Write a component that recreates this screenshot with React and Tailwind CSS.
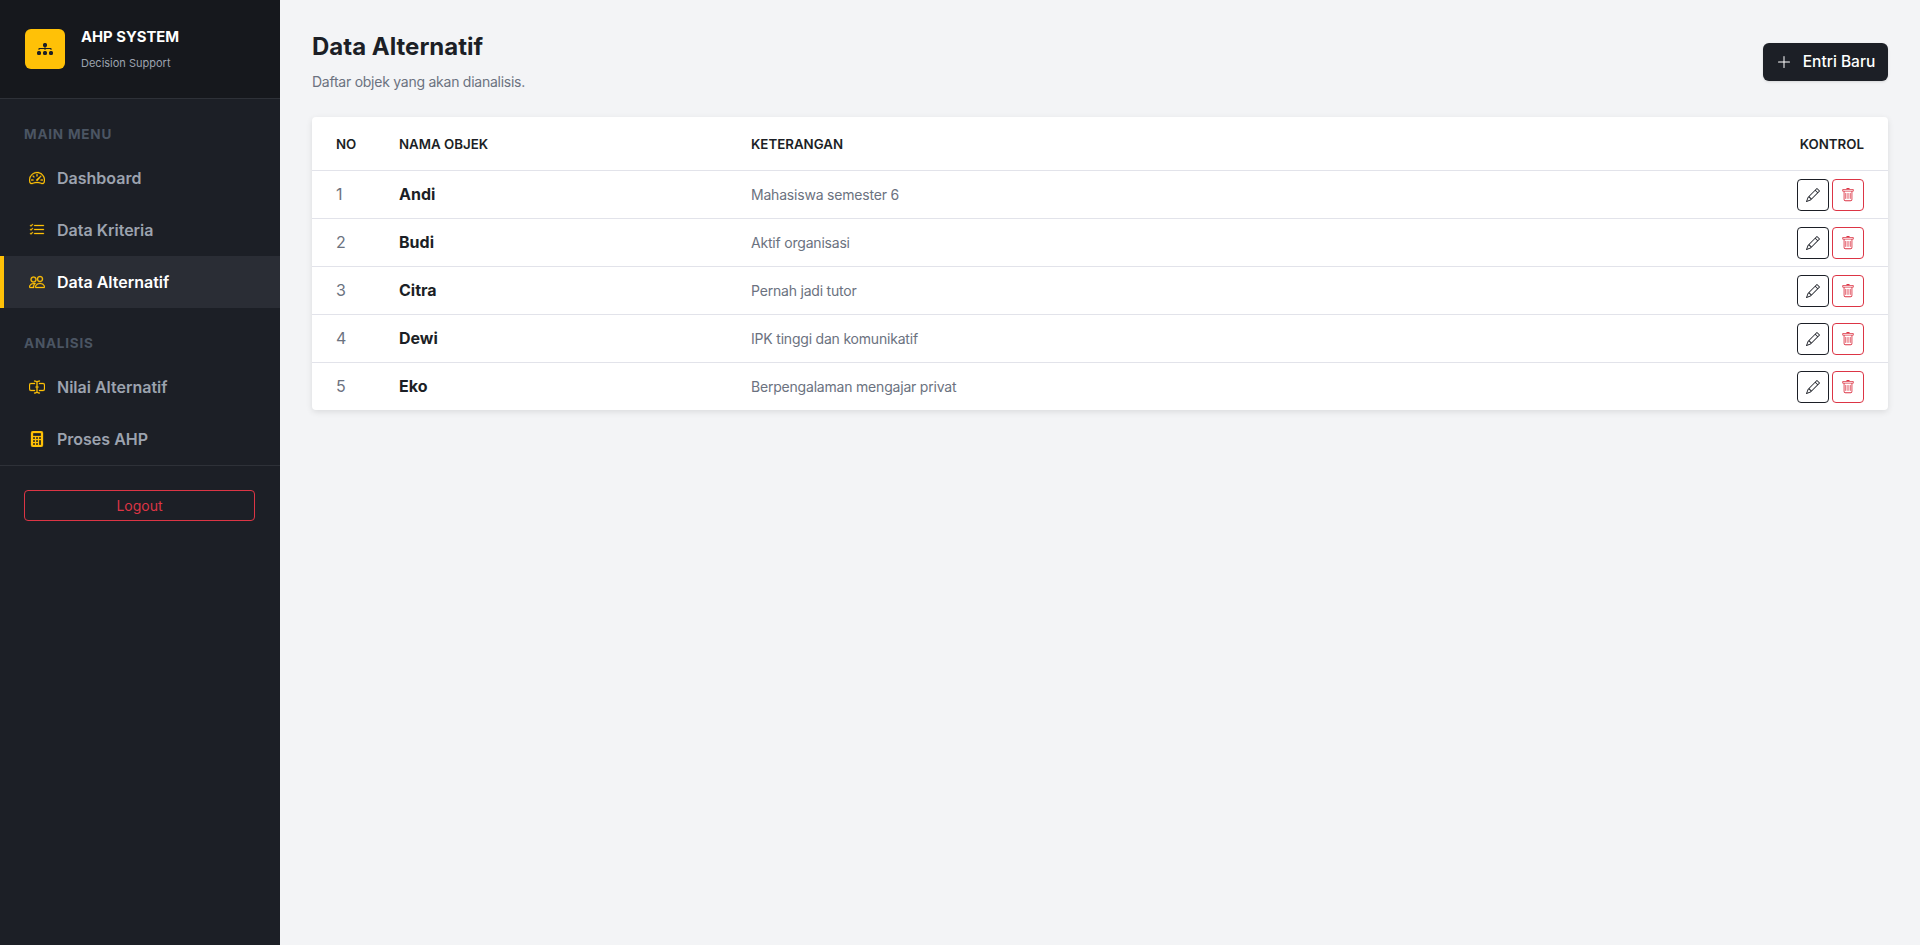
import React from "react";
import { BsSpeedometer2, BsListCheck, BsPeople, BsInputCursorText, BsCalculatorFill, BsDiagram3Fill, BsPencil, BsTrash, BsPlusLg } from "react-icons/bs";

function NavItem({ icon: Icon, label, active }) {
  return (
    <a className={"flex h-[52px] items-center border-l-4 pl-[25px] text-[16px] font-semibold " + (active ? "border-[#ffc107] bg-[#2a2d35] text-white" : "border-transparent text-[#9ca3af]")}>
      <Icon className="mr-[12px] h-[16px] w-[16px] shrink-0 stroke-[0.3px] text-[#ffc107]" />
      {label}
    </a>
  );
}

const rows = [
  ["1", "Andi", "Mahasiswa semester 6"],
  ["2", "Budi", "Aktif organisasi"],
  ["3", "Citra", "Pernah jadi tutor"],
  ["4", "Dewi", "IPK tinggi dan komunikatif"],
  ["5", "Eko", "Berpengalaman mengajar privat"],
];

export default function App() {
  return (
    <div className="flex min-h-screen bg-[#f3f4f6] font-['Inter','Liberation_Sans',sans-serif]">
      <aside className="w-[280px] shrink-0 bg-[#1c1f26]">
        <div className="flex h-[99px] items-center gap-[16px] border-b border-[#2e3138] bg-[#16181d] pl-[25px]">
          <div className="flex h-[40px] w-[40px] items-center justify-center rounded-[6px] bg-[#ffc107] text-[#1c1f26]">
            <BsDiagram3Fill className="h-[16px] w-[16px]" />
          </div>
          <div className="pb-[3px]">
            <div className="text-[14.8px] leading-[24px] font-bold text-white">AHP SYSTEM</div>
            <div className="mt-[6px] text-[11px] leading-[16px] text-[#9ca3af]">Decision Support</div>
          </div>
        </div>
        <div className="pt-[25px] pb-[8px] pl-[24px] text-[13.5px] leading-[20px] font-bold tracking-[0.8px] text-[#4b5563]">MAIN MENU</div>
        <NavItem icon={BsSpeedometer2} label="Dashboard" />
        <NavItem icon={BsListCheck} label="Data Kriteria" />
        <NavItem icon={BsPeople} label="Data Alternatif" active />
        <div className="pt-[25px] pb-[8px] pl-[24px] text-[13.5px] leading-[20px] font-bold tracking-[0.8px] text-[#4b5563]">ANALISIS</div>
        <NavItem icon={BsInputCursorText} label="Nilai Alternatif" />
        <NavItem icon={BsCalculatorFill} label="Proses AHP" />
        <div className="border-t border-[#2e3138] pt-[24px] pr-[25px] pl-[24px]">
          <button className="flex h-[31px] w-full items-center justify-center rounded-[4px] border border-[#dc3545] text-[14px] text-[#dc3545]">Logout</button>
        </div>
      </aside>
      <main className="min-w-0 flex-1 px-[32px] pt-[32px]">
        <div className="flex items-center justify-between">
          <div>
            <h1 className="text-[24px] leading-[29px] font-bold text-[#1c1f26]">Data Alternatif</h1>
            <p className="mt-[10px] text-[14px] leading-[21px] tracking-[-0.25px] text-[#6b7280]">Daftar objek yang akan dianalisis.</p>
          </div>
          <button className="flex h-[38px] w-[125px] items-center justify-center gap-[11px] rounded-[6px] bg-[#1c1f26] text-[15.5px] font-medium text-white shadow-sm">
            <BsPlusLg className="h-[16px] w-[16px]" />
            Entri Baru
          </button>
        </div>
        <div className="mt-[25px] overflow-hidden rounded-[4px] bg-white shadow-[0_2px_6px_rgba(0,0,0,0.1)]">
          <table className="w-full border-collapse text-left">
            <thead>
              <tr className="h-[53px] border-b border-[#e2e3ea] text-[13.3px] text-[#1c1f26]">
                <th className="w-[87px] pt-[3px] pl-[24px] font-semibold">NO</th>
                <th className="w-[352px] pt-[3px] font-semibold">NAMA OBJEK</th>
                <th className="pt-[3px] font-semibold">KETERANGAN</th>
                <th className="pt-[3px] pr-[24px] text-right font-semibold">KONTROL</th>
              </tr>
            </thead>
            <tbody>
              {rows.map((r, i) => (
                <tr key={r[0]} className={"h-[48px] " + (i < rows.length - 1 ? "border-b border-[#e2e3ea]" : "")}>
                  <td className="pl-[24px] text-[16px] text-[#6b7280]">{r[0]}</td>
                  <td className="text-[16px] font-bold text-[#1c1f26]">{r[1]}</td>
                  <td className="text-[14px] tracking-[-0.2px] text-[#6b7280]">{r[2]}</td>
                  <td className="pt-[1px] pr-[24px]">
                    <div className="flex justify-end gap-[3px]">
                      <button className="flex h-[32px] w-[32px] items-center justify-center rounded-[4px] border border-[#1c1f26] text-[#1c1f26]"><BsPencil className="h-[14px] w-[14px]" /></button>
                      <button className="flex h-[32px] w-[32px] items-center justify-center rounded-[4px] border border-[#dc3545] text-[#dc3545]"><BsTrash className="h-[14px] w-[14px]" /></button>
                    </div>
                  </td>
                </tr>
              ))}
            </tbody>
          </table>
        </div>
      </main>
    </div>
  );
}
